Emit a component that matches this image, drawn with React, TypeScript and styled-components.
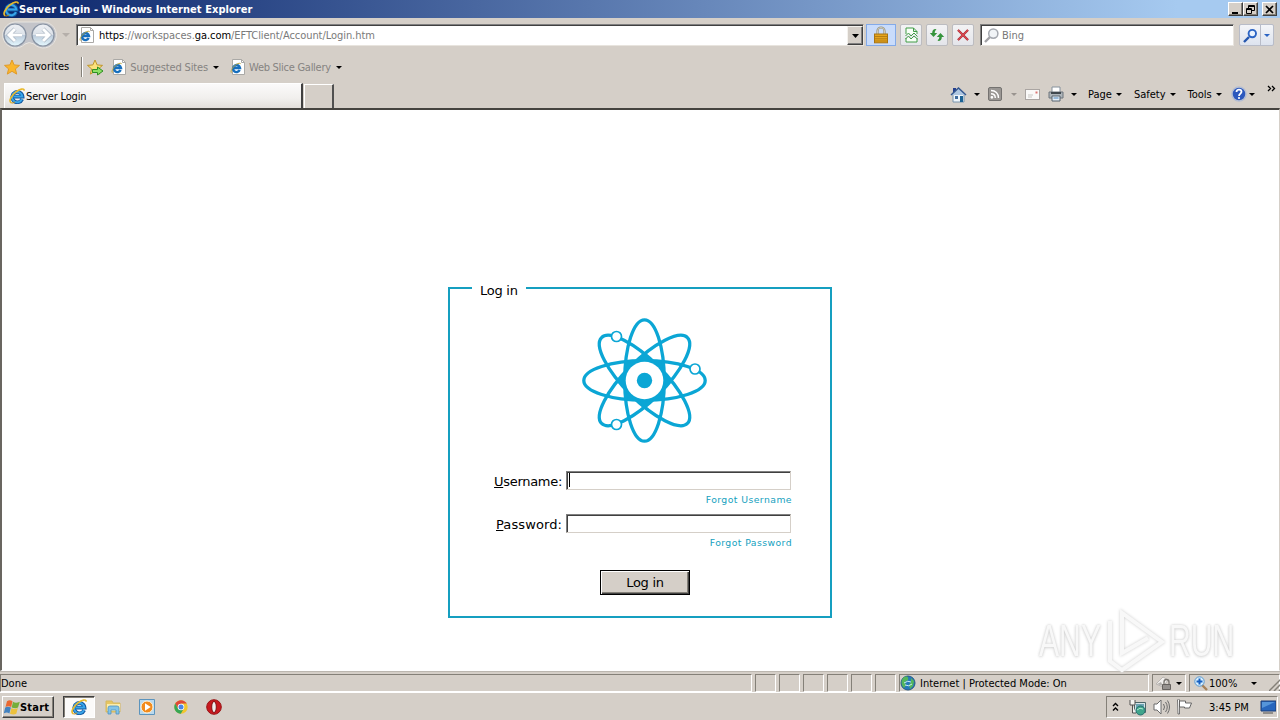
import React from "react";
import styled, { createGlobalStyle, css } from "styled-components";

const FACE = "#d5cfc8";

const Global = createGlobalStyle`
  * { box-sizing: border-box; }
  body { margin: 0; background: #fff; overflow: hidden; }
  svg { display: block; flex: none; }
`;

const Window = styled.div`
  width: 1280px; height: 720px; display: flex; flex-direction: column; overflow: hidden;
  background: ${FACE}; color: #000;
  font-family: "DejaVu Sans Condensed", "DejaVu Sans", sans-serif; font-stretch: condensed;
  font-size: 11px; line-height: 14px; white-space: nowrap;
`;

const Label = styled.span<{ $ls?: number; $ml?: number; $pt?: number; $color?: string; $bold?: boolean }>`
  letter-spacing: ${(p) => p.$ls ?? 0}px;
  margin-left: ${(p) => p.$ml ?? 0}px;
  padding-top: ${(p) => p.$pt ?? 0}px;
  color: ${(p) => p.$color ?? "inherit"};
  font-weight: ${(p) => (p.$bold ? 700 : 400)};
`;

const TitleBar = styled.header`
  height: 18px; flex: none; display: flex; align-items: center; padding: 0 3px;
  background: linear-gradient(90deg, #0a246a 0%, #a6caf0 92%); color: #fff;
`;
const WindowButtons = styled.div`display: flex; margin-left: auto;`;
const CaptionButton = styled.button<{ $gap?: number }>`
  width: 15px; height: 14px; padding: 0; margin-left: ${(p) => p.$gap ?? 0}px;
  display: flex; align-items: center; justify-content: center; background: ${FACE};
  border: 1px solid; border-color: #fff #404040 #404040 #fff; box-shadow: inset -1px -1px #848078;
`;

const AddressRow = styled.div`
  height: 34px; flex: none; display: flex; align-items: center; padding: 0 6px 0 1px;
`;
const AddressBox = styled.div`
  width: 788px; height: 22px; margin-left: 6px; display: flex; align-items: center; background: #fff;
  border: 1px solid; border-color: #808080 #e8e4de #e8e4de #808080; box-shadow: inset 1px 1px #404040;
  padding-left: 2px;
`;
const DropButton = styled.button`
  width: 16px; height: 19px; margin: 1px 0 0 auto; padding: 0; background: ${FACE};
  display: flex; align-items: center; justify-content: center;
  border: 1px solid; border-color: #f4f2ee #404040 #404040 #f4f2ee; box-shadow: inset -1px -1px #808080;
`;
const LockPane = styled.div`
  width: 30px; height: 22px; margin-left: 2px; display: flex; align-items: center; justify-content: center;
  background: #c9dcfb; border: 1px solid #83aae8;
`;
const ToolButton = styled.button<{ $ml: number; $w?: number }>`
  width: ${(p) => p.$w ?? 22}px; height: 22px; margin-left: ${(p) => p.$ml}px; padding: 0;
  display: flex; align-items: center; justify-content: center; border: 1px solid #bcbcc0;
  border-radius: 2px; background: linear-gradient(#f3f3f4, #e4e5ea);
`;
const SearchBox = styled.div`
  width: 254px; height: 22px; margin-left: 6px; display: flex; align-items: center; background: #fff;
  border: 1px solid; border-color: #808080 #e8e4de #e8e4de #808080; box-shadow: inset 1px 1px #404040;
  padding-left: 3px;
`;
const SplitButton = styled.div`
  width: 35px; height: 22px; margin-left: 5px; display: flex; border: 1px solid #b8bcc8; border-radius: 2px;
  background: linear-gradient(#f4f5f8, #dde3ee);
  & > div { display: flex; align-items: center; justify-content: center; width: 20px; }
  & > div + div { width: 13px; border-left: 1px solid #b8bcc8; }
`;

const FavoritesRow = styled.div`
  height: 30px; flex: none; display: flex; align-items: center; padding-left: 4px;
`;
const Divider = styled.i`
  width: 2px; height: 20px; margin: 0 4px 0 12px; border-left: 1px solid #848078; border-right: 1px solid #fff;
`;

const TabRow = styled.div`height: 26px; flex: none; display: flex; align-items: flex-start; padding-left: 4px;`;
const Tab = styled.div`
  width: 299px; height: 25px; margin-top: 1px; display: flex; align-items: center; padding-left: 4px;
  background: linear-gradient(#fbfafa, #f1efed 60%, #e2deda);
  border-left: 1px solid #fff; border-right: 2px solid #404040; border-top: 1px solid #fff;
`;
const NewTab = styled.div`
  width: 30px; height: 24px; margin: 2px 0 0 1px; border: 1px solid #fff; border-bottom: 0;
  border-right: 2px solid #505050;
`;
const CommandBar = styled.div`
  margin-left: auto; width: 330px; height: 24px; display: flex; align-items: center;
`;
const Slot = styled.span<{ $ml: number }>`display: block; margin-left: ${(p) => p.$ml}px;`;

const Viewport = styled.main`
  position: relative; height: 563px; flex: none; background: #fff;
  border: 2px solid; border-color: #45433f #d5cfc8 #fff #45433f; border-right-width: 1px;
  border-left-color: #696660; border-bottom: 1px solid #fff;
  display: flex; justify-content: center; align-items: flex-start;
`;
const LoginForm = styled.fieldset`
  width: 384px; height: 339px; margin: 169px 0 0 -1px; padding: 0; border: 2px solid #159fc0;
  font-family: "DejaVu Sans", Verdana, sans-serif; font-stretch: normal; font-size: 13px; line-height: 16px;
  display: flex; flex-direction: column;
  & legend { margin-left: 22px; padding: 4px 8px 0; width: 54px; height: 18px; line-height: 16px; letter-spacing: -0.25px; }
`;
const LogoBox = styled.div`display: flex; justify-content: center; padding: 21px 0 0 10px;`;
const Field = styled.div<{ $mt: number }>`
  display: flex; align-items: center; justify-content: flex-end; height: 20px;
  margin: ${(p) => p.$mt}px 39px 0 0;
`;
const Input = styled.div`
  width: 225px; height: 19px; margin-left: 4px; background: #fff; padding: 1px;
  border: 1px solid; border-color: #808080 #d5cfc8 #d5cfc8 #808080; box-shadow: inset 1px 1px #404040;
`;
const Caret = styled.i`display: block; width: 1px; height: 14px; margin: 0 0 0 1px; background: #000;`;
const Hint = styled.a`
  align-self: flex-end; margin-right: 38px; height: 14px; line-height: 14px; font-size: 9.3px; color: #159fc0;
  margin-top: 3px; letter-spacing: 0.42px;
`;
const Submit = styled.button`
  width: 90px; height: 25px; margin: 20px 0 0 150px; padding: 0; background: ${FACE}; color: #000;
  font: inherit; letter-spacing: -0.25px; border: 1px solid #000;
  box-shadow: inset 1px 1px #fff, inset -1px -1px #404040, inset -2px -2px #848078;
`;
const Watermark = styled.div`
  position: absolute; left: 1037px; top: 498px; width: 194px; height: 66px; display: flex; align-items: center;
  justify-content: space-between; color: #f8f8f8; font-family: "Liberation Sans", sans-serif; font-size: 45px; line-height: 60px;
  text-shadow: 0 0 3px #ccc, 0 1px 4px #ddd;
  & span { display: block; width: 64px; transform: scaleX(0.67); transform-origin: 0 50%; }
  & svg { filter: drop-shadow(0 0 1.5px #ccc); }
`;

const StatusBar = styled.div`
  height: 22px; flex: none; display: flex; gap: 3px; padding-top: 2px; border-bottom: 1px solid #fff;
  border-top: 1px solid #bcb7b0;
`;
const Pane = styled.div<{ $w: number }>`
  width: ${(p) => p.$w}px; height: 18px; flex: none; display: flex; align-items: center;
  border: 1px solid; border-color: #848078 #fff #fff #848078;
`;
const Taskbar = styled.footer`height: 27px; flex: none; display: flex; align-items: center; padding: 1px 2px 0;`;
const raised = css`border: 1px solid; border-color: #fff #404040 #404040 #fff; box-shadow: inset -1px -1px #848078;`;
const Start = styled.button`
  width: 52px; height: 22px; padding: 0 0 0 1px; display: flex; align-items: center; background: ${FACE};
  font: inherit; color: #000; ${raised}
`;
const ActiveTask = styled.div`
  width: 32px; height: 22px; margin-left: 9px; display: flex; align-items: center; justify-content: center;
  background: #fbfaf9; border: 1px solid; border-color: #404040 #fff #fff #404040; box-shadow: inset 1px 1px #848078;
`;
const Tray = styled.div`
  width: 172px; height: 22px; margin-left: auto; display: flex; align-items: center;
  border: 1px solid; border-color: #848078 #fff #fff #848078;
`;

const Arrow = ({ w = 6, color = "#000" }: { w?: number; color?: string }) => (
  <svg width={w} height={Math.ceil(w / 2)} viewBox="0 0 6 3" preserveAspectRatio="none"><path d="M0 0H6L3 3Z" fill={color} /></svg>
);

const IE = ({ size = 16 }: { size?: number }) => (
  <svg width={size} height={size} viewBox="0 0 16 16" fill="none">
    <path d="M13.2 11.2A5.2 5.2 0 1 1 13.6 8.6H4.5" stroke="#12569e" strokeWidth="3.6" />
    <path d="M13 11.2A5.2 5.2 0 1 1 13.4 8.5H4.5" stroke="#38a5ea" strokeWidth="2" />
    <path d="M2.2 14.8C-.8 13.2 2.7 7.2 7 3.8c4-3.1 8.1-3.8 8.2-1.2" stroke="#e9b92c" strokeWidth="1.7" />
    <path d="M2.2 14.8c1.2.6 2.8-.2 4-1" stroke="#c98f12" strokeWidth="1" />
  </svg>
);

const PageIE = () => (
  <svg width="16" height="16" viewBox="0 0 16 16" fill="none">
    <path d="M2.5.5h9l3 3v12h-12z" fill="#fff" stroke="#aaa9a6" />
    <path d="M11.5.5v3h3" stroke="#aaa9a6" />
    <path d="M9.7 11.1A3.5 3.5 0 1 1 10 9H3.5" stroke="#176fbd" strokeWidth="2.4" />
    <path d="M1.3 13.6C.2 11.7 3.3 7.3 6.5 5.3c2.2-1.3 4-1.4 4.2-.2" stroke="#c0a83c" />
  </svg>
);

const NavButtons = () => (
  <svg width="60" height="28" viewBox="0 0 60 28">
    <defs><linearGradient id="nav" x2="0" y2="1"><stop stopColor="#eef0f4" /><stop offset=".48" stopColor="#dce2e9" /><stop offset=".52" stopColor="#bccbdb" /><stop offset="1" stopColor="#e6f9ff" /></linearGradient></defs>
    <path d="M14 1H42a13 13 0 1 1-9 22q-5-3-9 0A13 13 0 1 1 14 1Z" fill="#c3c4c9" stroke="#e8e5e1" />
    {[14, 42].map((x) => <circle key={x} cx={x} cy="14" r="11" fill="url(#nav)" stroke="#8792a2" strokeWidth="1.2" />)}
    <path d="M21 14H8m6-6-6 6 6 6M35 14h13m-6-6 6 6-6 6" fill="none" stroke="#a3afbd" strokeWidth="4.2" />
    <path d="M21 14H8m6-6-6 6 6 6M35 14h13m-6-6 6 6-6 6" fill="none" stroke="#fff" strokeWidth="3" />
  </svg>
);

const Star = ({ add }: { add?: boolean }) => (
  <svg width="17" height="17" viewBox="0 0 17 17">
    <path d="M8 1l2.1 4.9 5.4.5-4.1 3.5 1.3 5.2L8 12.3l-4.7 2.8 1.3-5.2L.5 6.4l5.4-.5Z" fill={add ? "#fbe17c" : "#fbb62c"} stroke={add ? "#c0962a" : "#e09a28"} />
    {add && <path d="M5.5 10.5h5V8l5.5 4-5.5 4v-2.5h-5Z" fill="#8ce064" stroke="#2f8e24" />}
  </svg>
);

const Lens = ({ blue }: { blue?: boolean }) => (
  <svg width="15" height="15" viewBox="0 0 15 15" fill="none">
    <path d="M1 14l5-5" stroke={blue ? "#2456ae" : "#a1a1a5"} strokeWidth="2.4" />
    <circle cx="9.3" cy="5.6" r={blue ? 3.7 : 4.6} fill={blue ? "#eaf3ff" : "#f1f4f7"} stroke={blue ? "#2b64c4" : "#a5a9b0"} strokeWidth={blue ? 1.9 : 1.5} />
  </svg>
);

const Lock = () => (
  <svg width="16" height="18" viewBox="0 0 16 18" fill="none">
    <path d="M4.5 9V5a3.5 3.5 0 0 1 7 0v4" stroke="#96927e" strokeWidth="2.2" />
    <path d="M4.5 9V5a3.5 3.5 0 0 1 7 0v4" stroke="#dedbc9" strokeWidth=".8" />
    <rect x="1.5" y="8" width="13" height="8.8" fill="#e6a51d" stroke="#a87412" />
    <path d="M2 10.5h12M2 12.8h12M2 15h12" stroke="#b47e16" />
  </svg>
);

const Compat = () => (
  <svg width="13" height="16" viewBox="0 0 13 16" fill="none" stroke="#419c46">
    <path d="M1 7V1h7.5L12 4.5V7M1 11v4h11v-4M8.5 1v3.5H12" fill="#f8fff7" />
    <path d="M.5 9 3.5 6l2.5 3L9 6l3.5 3.5M.5 12l3-3L6 12l3-3 3.5 3" />
  </svg>
);
const Refresh = () => (
  <svg width="16" height="16" viewBox="0 0 16 16" fill="#36943c">
    <path d="M6.5 2 C4.5 2 3.2 3.5 3.2 6H.8l3.7 4 3.7-4H5.7c0-1.5.5-2.5 1.8-3.2ZM9.5 14c2 0 3.3-1.5 3.3-4h2.4l-3.7-4-3.7 4h2.5c0 1.5-.5 2.5-1.8 3.2Z" />
  </svg>
);
const Stop = () => (
  <svg width="12" height="12" viewBox="0 0 12 12" fill="none"><path d="m1 1 10 10M11 1 1 11" stroke="#8c2530" strokeWidth="2.2" /><path d="m1 1 10 10M11 1 1 11" stroke="#dc4850" strokeWidth="1.5" /></svg>
);

const Home = () => (
  <svg width="17" height="17" viewBox="0 0 17 17">
    <path d="M3 2h3v5H3Z" fill="#25408e" /><path d="M3 8h11v8H3Z" fill="#eef5fb" stroke="#7894ac" />
    <path d="M1 9 8.5 2 16 9" fill="#afc7e1" stroke="#35588f" strokeWidth="1.5" />
    <path d="M5 10h3v3H5Z" fill="#406d9e" /><path d="M10 10h3v6h-3Z" fill="#1b6294" />
  </svg>
);
const Feed = () => (
  <svg width="14" height="14" viewBox="0 0 14 14" fill="none" stroke="#fff" strokeWidth="1.4">
    <rect x=".5" y=".5" width="13" height="13" rx="1.5" fill="#9a9794" stroke="#747270" strokeWidth="1" />
    <path d="M3 3.5c4.5 0 7.5 3 7.5 7.5M3 6.7c2.7 0 4.3 1.6 4.3 4.3" /><circle cx="3.9" cy="10.3" r=".7" fill="#fff" />
  </svg>
);
const Mail = () => (
  <svg width="15" height="11" viewBox="0 0 15 11" fill="none"><rect x=".5" y=".5" width="14" height="10" fill="#faf9f8" stroke="#aaa5a2" /><path d="M3 6h5M3 8h4" stroke="#c8c6c3" /><path d="M10.5 2.5h2v2h-2z" fill="#dc7472" /></svg>
);
const Printer = () => (
  <svg width="16" height="16" viewBox="0 0 16 16"><path d="M4 1h8v6H4Z" fill="#fff" stroke="#85919c" /><path d="M1 6h14v6H1Z" fill="#aeb5ba" stroke="#6c757c" /><path d="M3 6h10v2H3Z" fill="#40484e" /><path d="M4 10h8v5H4Z" fill="#e4eef6" stroke="#586470" /><path d="M5.5 12h5" stroke="#4a84bd" /></svg>
);
const Help = () => (
  <svg width="16" height="16" viewBox="0 0 16 16" fill="none"><circle cx="8" cy="8" r="7" fill="#2c58bd" stroke="#b3bdd3" strokeWidth="1.5" /><path d="M5.5 6c0-3.2 5-3 5-.2C10.5 7.5 8 7.8 8 10" stroke="#fff" strokeWidth="1.8" /><circle cx="8" cy="12" r="1.1" fill="#fff" /></svg>
);

const Atom = () => (
  <svg width="126" height="126" viewBox="-62.5 -62.5 126 126" fill="none" stroke="#0ba6d5">
    <path d="M0-27 27 0 0 27-27 0ZM-20-20H20V20H-20Z" fill="#0ba6d5" stroke="none" />
    {[0, 45, 90, 135].map((a) => <ellipse key={a} rx="60.7" ry="19.8" strokeWidth="3.3" transform={`rotate(${a})`} />)}
    <circle r="18.8" fill="#fff" stroke="none" /><circle r="7.7" fill="#0ba6d5" stroke="none" />
    {[[-28, -44], [50.5, -11.5], [-28, 44]].map(([x, y]) => <circle key={`${x},${y}`} cx={x} cy={y} r="5" fill="#fff" strokeWidth="1.7" />)}
  </svg>
);

const Globe = () => (
  <svg width="16" height="16" viewBox="0 0 16 16"><circle cx="8" cy="8" r="7" fill="#2679b9" stroke="#275883" /><path d="M3 3c4-3 6-1 5 2L5 7l1 3-2 3C1 10 1 6 3 3ZM11 3l3 3-1 5-3 3-1-4 2-3Z" fill="#54b65b" /><path d="M4 8q4-3 7-1M5 10q4 2 7-1" fill="none" stroke="#c9ecf5" /></svg>
);
const ZoomGlass = () => (
  <svg width="14" height="15" viewBox="0 0 14 15" fill="none"><path d="m8 9 5 5" stroke="#a78158" strokeWidth="2.4" /><circle cx="5.5" cy="5.5" r="4.7" fill="#d8effd" stroke="#5797d0" /><path d="M5.5 2.5v6m-3-3h6" stroke="#155fc1" strokeWidth="2" /></svg>
);
const Privacy = () => (
  <svg width="18" height="16" viewBox="0 0 18 16" fill="none"><path d="M1 9 8 2l5 3-5 7Z" fill="#f1efed" stroke="#b9b5b2" /><path d="m2 9 4-2 2 4" fill="#b3b0ad" /><path d="M9 10V7a2.5 2.5 0 0 1 5 0v3" stroke="#77736f" strokeWidth="1.3" /><path d="M7.5 9.5h8v5h-8Z" fill="#95918e" stroke="#66625f" /></svg>
);
const Flag = () => (
  <svg width="16" height="16" viewBox="0 0 15 16"><path d="M0 .8C.5 0 1.7 0 2 .8V15H.5Z" fill="#fff" stroke="#595959" strokeWidth=".8" /><path d="M2 2h6v2h6l-2 5H7V8H2Z" fill="#fff" stroke="#595959" strokeWidth=".9" /></svg>
);
const Windows = () => (
  <svg width="16" height="15" viewBox="0 0 16 15"><path d="M3 1.2c2-1.4 3.5-1.3 5.5 0L7.2 7C5.3 5.8 3.3 5.9 1.5 7Z" fill="#e96831" /><path d="M9 1.8c2 1.2 4 1.1 6.8 0L14 7.4c-2 1.2-4 .9-6.3 0Z" fill="#75ae3a" /><path d="M1.2 7.6c2-1.2 3.5-1 5.7 0L5.4 13.4C3.4 12.1 1.8 12.3-.2 13.4Z" fill="#4382bf" /><path d="M7.5 8.1c2 1.2 4 1.1 6.3 0L12.3 13.8c-2 1.2-4 .9-6.3 0Z" fill="#ecc13c" /></svg>
);
const Explorer = () => (
  <svg width="17" height="16" viewBox="0 0 17 16"><path d="M1 2h6l1 2h7v9H1Z" fill="#e7c661" stroke="#d5b860" /><path d="M2 5h13v7H2Z" fill="#faecad" /><path d="M3 15V9q0-2 2-2h7q2 0 2 2v6h-3v-4H6v4Z" fill="#83c4e8" stroke="#4e93c0" strokeWidth=".8" /></svg>
);
const Player = () => (
  <svg width="16" height="16" viewBox="0 0 16 16"><path d="M.5.5h15v15H.5Z" fill="#b9d9ee" stroke="#5c94bd" /><circle cx="8" cy="8" r="6" fill="#f28b1c" stroke="#fff3db" /><path d="M6 4.3 11.7 8 6 11.7Z" fill="#fff" /></svg>
);
const Chrome = () => (
  <svg width="14" height="14" viewBox="-7 -7 14 14"><circle r="6.7" fill="#f2c62e" /><path d="M-5.8-3.4A6.7 6.7 0 0 1 5.8-3.4H0L-2.9 1.7Z" fill="#df4838" /><path d="M-5.8-3.4-2.9 1.7 0 3.3 2.5 2-.2 6.7A6.7 6.7 0 0 1-5.8-3.4Z" fill="#36a655" /><circle r="3.3" fill="#fff" /><circle r="2.5" fill="#4a85e5" /></svg>
);
const Opera = () => (
  <svg width="16" height="16" viewBox="0 0 16 16"><circle cx="8" cy="8" r="7.3" fill="#c9191f" stroke="#981416" /><ellipse cx="8" cy="8" rx="2.3" ry="5.6" fill="#eee" stroke="#7e1011" /></svg>
);
const Network = () => (
  <svg width="17" height="17" viewBox="0 0 17 17"><path d="M5.5 3.5h11v10h-11Z" fill="#d6e4e8" stroke="#4d6668" /><path d="M7 5h8v7H7Z" fill="#6ba5b3" /><path d="M1 1v5h5V1M3.5 6v8H7" fill="#f4f3f0" stroke="#525252" /><circle cx="11.5" cy="11.5" r="4.5" fill="#40a58b" stroke="#286f70" /><path d="M8 11q3-3 6-1" stroke="#b1ead4" fill="none" /></svg>
);
const Speaker = () => (
  <svg width="17" height="16" viewBox="0 0 17 16" fill="none" stroke="#6b6b6b"><path d="M1 5h3l4-4v14l-4-4H1Z" fill="#fff" /><path d="M10.5 5q2 3 0 6M12.5 3q3.5 5 0 10M14.5 1.5q4 6.5 0 13" /></svg>
);

export default function App() {
  return (
    <>
      <Global />
      <Window>
        <TitleBar>
          <IE />
          <Label $bold $pt={1} $ls={0.05}>Server Login - Windows Internet Explorer</Label>
          <WindowButtons>
            <CaptionButton aria-label="Minimize"><svg width="9" height="9"><path d="M1 7h6v2H1Z" /></svg></CaptionButton>
            <CaptionButton aria-label="Restore"><svg width="9" height="9" fill="none" stroke="#000"><path d="M2.5 3V.5h6v5H6M.5 3.5h5v5h-5ZM2 1.5h6M0 4.5h6" /></svg></CaptionButton>
            <CaptionButton $gap={4} aria-label="Close"><svg width="9" height="9"><path d="m1 1 7 7M8 1 1 8" stroke="#000" strokeWidth="1.7" /></svg></CaptionButton>
          </WindowButtons>
        </TitleBar>

        <AddressRow>
          <NavButtons />
          <Slot $ml={1}><Arrow w={8} color="#b5afaa" /></Slot>
          <AddressBox>
            <PageIE />
            <Label $ml={4} $pt={2} $color="#7a7a7a" $ls={-0.055}><Label $color="#000" $ls={-0.055}>https</Label>://workspaces.<Label $color="#000" $ls={-0.055}>ga.com</Label>/EFTClient/Account/Login.htm</Label>
            <DropButton aria-label="History"><Arrow w={7} /></DropButton>
          </AddressBox>
          <LockPane><Lock /></LockPane>
          <ToolButton $ml={4}><Compat /></ToolButton>
          <ToolButton $ml={4}><Refresh /></ToolButton>
          <ToolButton $ml={4}><Stop /></ToolButton>
          <SearchBox><Lens /><Label $ml={3} $pt={2} $color="#777">Bing</Label></SearchBox>
          <SplitButton><div><Lens blue /></div><div><Arrow color="#2b64c4" /></div></SplitButton>
        </AddressRow>

        <FavoritesRow>
          <Star />
          <Label $ml={3} $ls={0.08}>Favorites</Label>
          <Divider />
          <Star add />
          <Slot $ml={7}><PageIE /></Slot>
          <Label $ml={3} $pt={1} $color="#858381" $ls={-0.15}>Suggested Sites</Label>
          <Slot $ml={5}><Arrow /></Slot>
          <Slot $ml={11}><PageIE /></Slot>
          <Label $ml={3} $pt={1} $color="#858381" $ls={-0.27}>Web Slice Gallery</Label>
          <Slot $ml={5}><Arrow /></Slot>
        </FavoritesRow>

        <TabRow>
          <Tab><IE /><Label $ml={1} $pt={1} $ls={-0.15}>Server Login</Label></Tab>
          <NewTab />
          <CommandBar>
            <Home /><Slot $ml={7}><Arrow /></Slot>
            <Slot $ml={8}><Feed /></Slot><Slot $ml={9}><Arrow color="#99948f" /></Slot>
            <Slot $ml={8}><Mail /></Slot>
            <Slot $ml={8}><Printer /></Slot><Slot $ml={7}><Arrow /></Slot>
            <Label $ml={11} $pt={1}>Page</Label><Slot $ml={4}><Arrow /></Slot>
            <Label $ml={12} $pt={1}>Safety</Label><Slot $ml={4}><Arrow /></Slot>
            <Label $ml={12} $pt={1}>Tools</Label><Slot $ml={4}><Arrow /></Slot>
            <Slot $ml={9}><Help /></Slot><Slot $ml={2}><Arrow /></Slot>
            <Slot $ml={12}><svg width="9" height="18" fill="none" stroke="#000" strokeWidth="1.3"><path d="m1 1 2.5 2.5L1 6M5 1l2.5 2.5L5 6" /></svg></Slot>
          </CommandBar>
        </TabRow>

        <Viewport>
          <LoginForm>
            <legend>Log in</legend>
            <LogoBox><Atom /></LogoBox>
            <Field $mt={26}><Label $ls={-0.3} $pt={3}><u>U</u>sername:</Label><Input><Caret /></Input></Field>
            <Hint>Forgot Username</Hint>
            <Field $mt={6}><Label $ls={0.1} $pt={3}><u>P</u>assword:</Label><Input /></Field>
            <Hint>Forgot Password</Hint>
            <Submit>Log in</Submit>
          </LoginForm>
          <Watermark>
            <span>ANY</span>
            <svg width="58" height="64" viewBox="0 0 58 64" fill="none" stroke="#f8f8f8" strokeWidth="4"><path d="M3 12v40l12 9 40-28L15 4v40l26-15" /></svg>
            <span>RUN</span>
          </Watermark>
        </Viewport>

        <StatusBar>
          <Pane $w={752}><Label $pt={1}>Done</Label></Pane>
          {[0, 1, 2, 3, 4, 5].map((n) => <Pane key={n} $w={21} />)}
          <Pane $w={250}><Slot $ml={0}><Globe /></Slot><Label $ml={4} $pt={1}>Internet | Protected Mode: On</Label></Pane>
          <Pane $w={34}><Slot $ml={2}><Privacy /></Slot><Slot $ml={3}><Arrow /></Slot></Pane>
          <Pane $w={91}><Slot $ml={4}><ZoomGlass /></Slot><Label $pt={1} $ml={1}>100%</Label><Slot $ml={14}><Arrow /></Slot>
            <Slot $ml={12}><svg width="12" height="15" stroke="#848078" strokeWidth="1.5"><path d="M0 15 12 3M5 15l7-7M10 15l2-2" /></svg></Slot>
          </Pane>
        </StatusBar>

        <Taskbar>
          <Start><Windows /><Label $bold $pt={1} $ls={0.2}>Start</Label></Start>
          <ActiveTask><IE /></ActiveTask>
          <Slot $ml={10}><Explorer /></Slot>
          <Slot $ml={17}><Player /></Slot>
          <Slot $ml={19}><Chrome /></Slot>
          <Slot $ml={18}><Opera /></Slot>
          <Tray>
            <Slot $ml={5}><svg width="7" height="10" fill="none" stroke="#000" strokeWidth="1.4"><path d="m1 4 2.5-2.5L6 4M1 8.5 3.5 6 6 8.5" /></svg></Slot>
            <Slot $ml={10}><Network /></Slot>
            <Slot $ml={7}><Speaker /></Slot>
            <Slot $ml={7}><Flag /></Slot>
            <Label $ml={16} $pt={1}>3:45 PM</Label>
            <Slot $ml={11}><svg width="16" height="15"><path d="M1 1h15v10H1Z" fill="#2766bd" stroke="#1d3d75" /><path d="M2 2h13L2 8Z" fill="#5595da" /><path d="M3 13h10" stroke="#4d4d4d" /></svg></Slot>
          </Tray>
        </Taskbar>
      </Window>
    </>
  );
}
